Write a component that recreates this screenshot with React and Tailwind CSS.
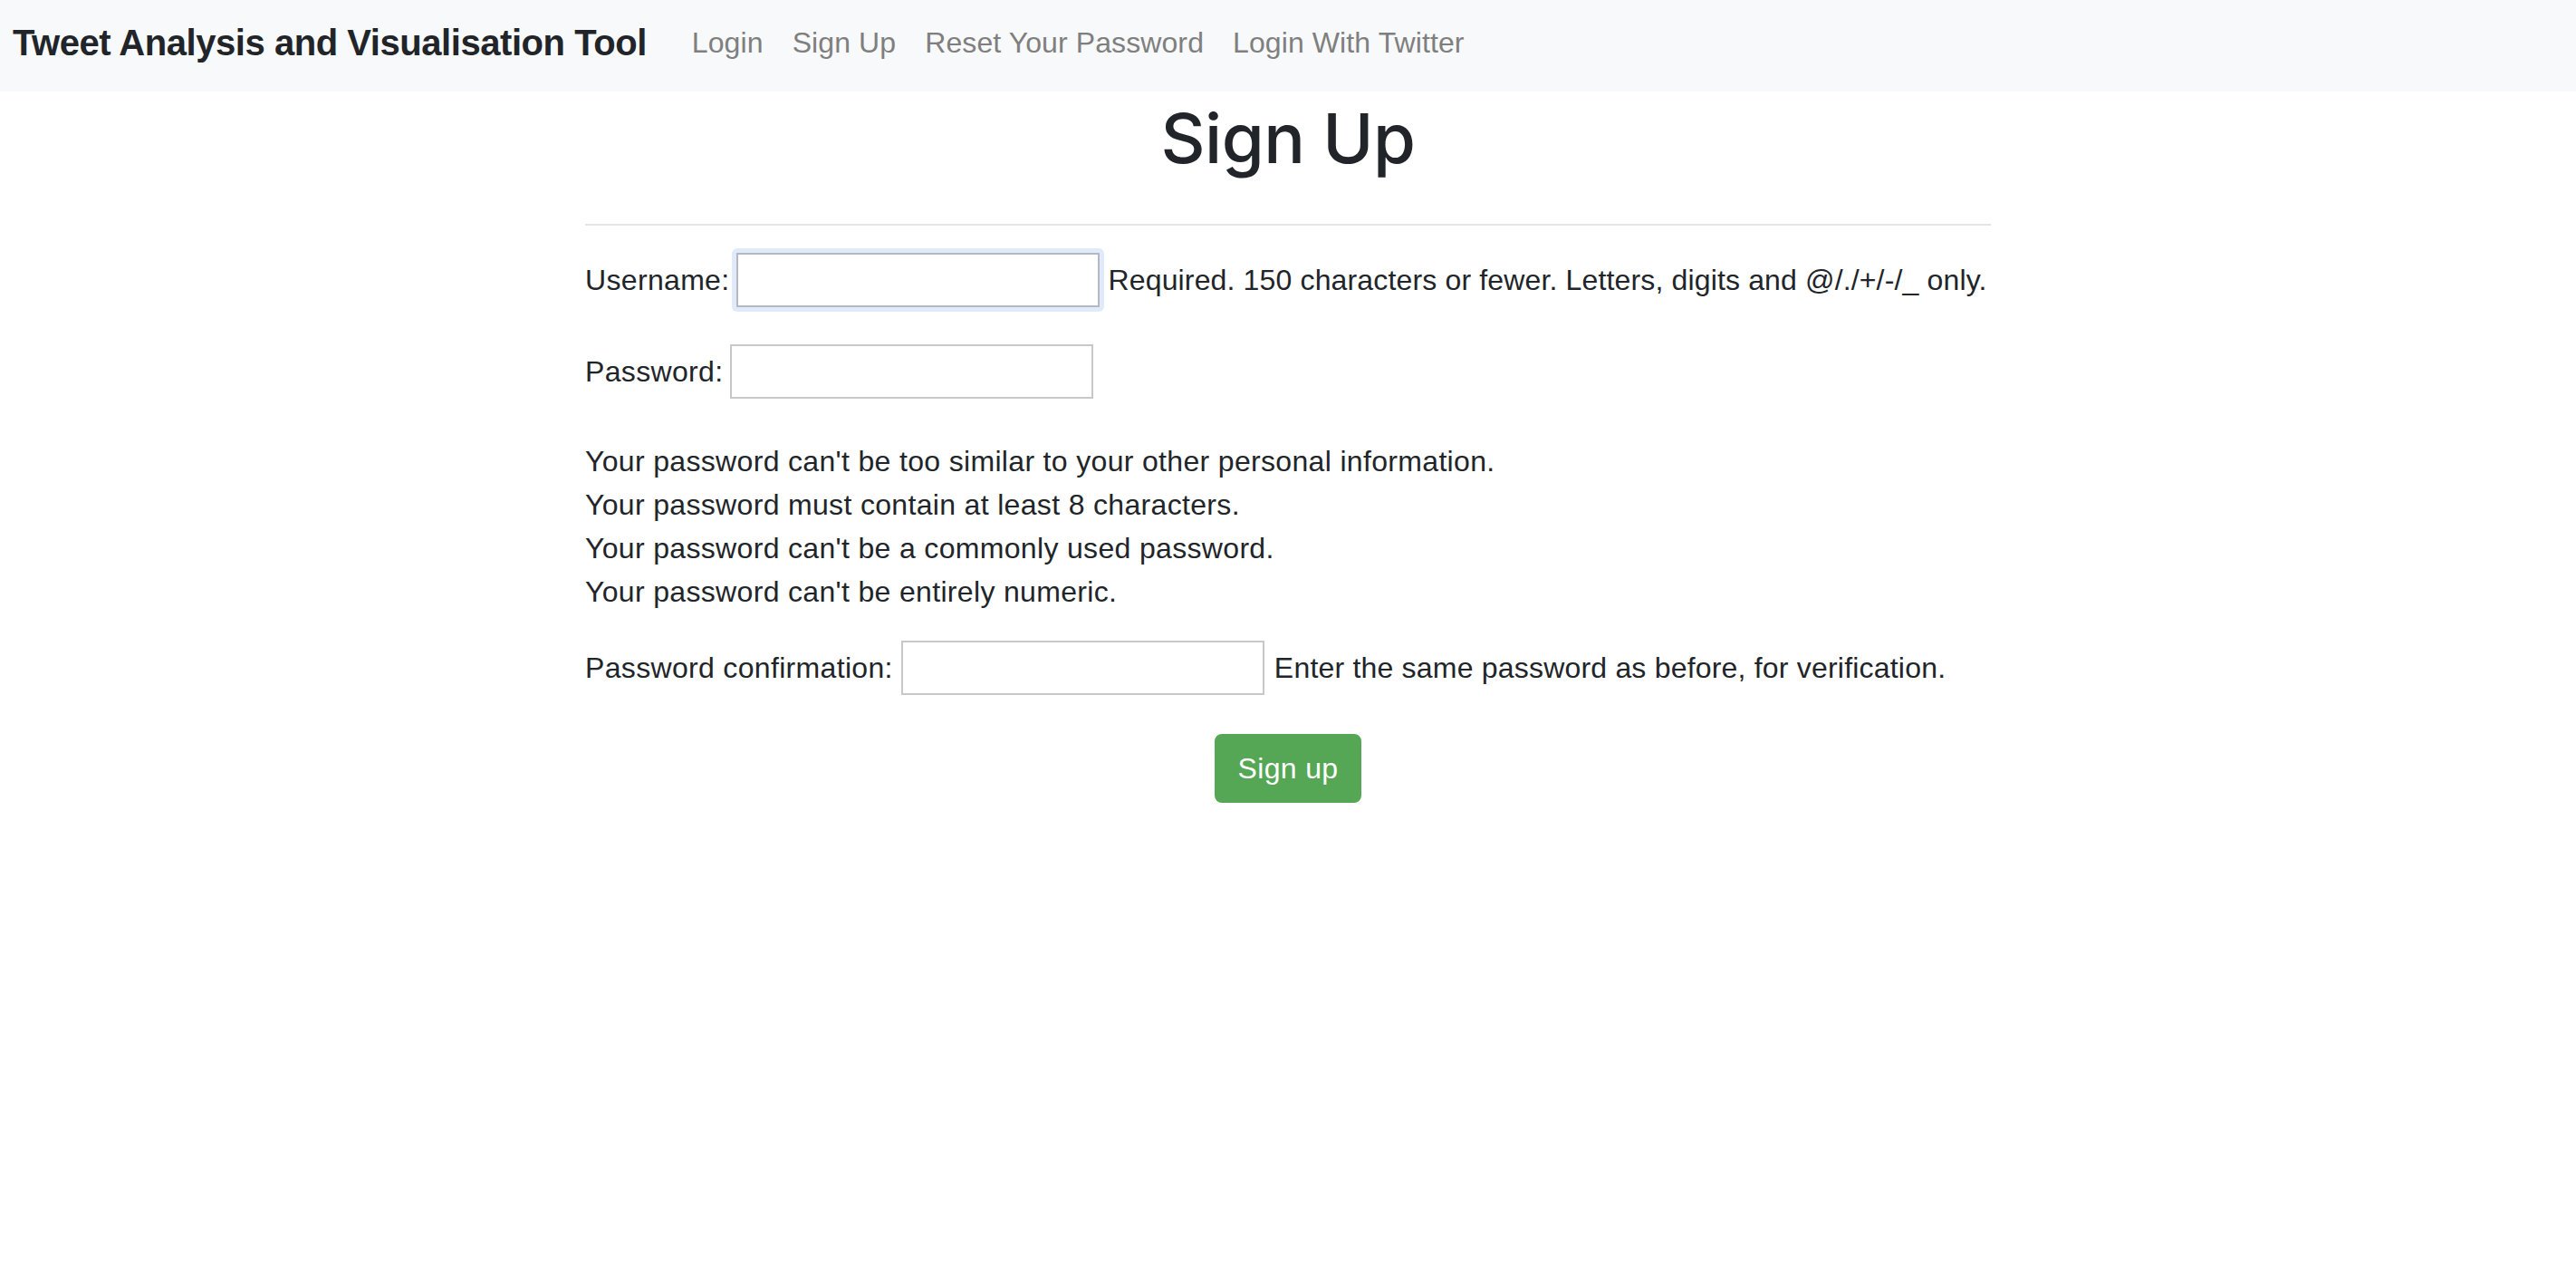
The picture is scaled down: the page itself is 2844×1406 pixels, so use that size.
const navLinks = ['Login', 'Sign Up', 'Reset Your Password', 'Login With Twitter'];

const rules = [
  "Your password can't be too similar to your other personal information.",
  'Your password must contain at least 8 characters.',
  "Your password can't be a commonly used password.",
  "Your password can't be entirely numeric.",
];

const Field = ({ focused }) => (
  <span className={`inline-block rounded-[6px] ${focused ? 'bg-[#e1eafb] p-[5px] -m-[5px]' : ''}`}>
    <input
      type="text"
      className={`block w-[401px] h-[60px] bg-white border-2 outline-none ${focused ? 'border-[#b3b8c2]' : 'border-[#c8c8c8]'}`}
    />
  </span>
);

export default function App() {
  return (
    <div className="min-h-screen bg-white text-[#212529] font-['Liberation_Sans',Arial,sans-serif] text-[32px] leading-[48px]">
      <nav className="h-[101px] bg-[#f8f9fa] flex items-center pl-[14px] pb-[8px]">
        <span className="text-[40px] leading-[60px] font-bold tracking-[-0.45px] text-[#212529]">
          Tweet Analysis and Visualisation Tool
        </span>
        <div className="flex ml-[34px]">
          {navLinks.map((l) => (
            <a key={l} href="#" className="px-[16px] text-[#7f7f7f] tracking-[0.1px]">
              {l}
            </a>
          ))}
        </div>
      </nav>

      <main className="w-[1552px] mx-auto tracking-[0.33px]">
        <h1 className="font-['Inter','Liberation_Sans',sans-serif] text-[76px] leading-[96px] font-medium tracking-[-0.5px] text-center mt-[3px]">
          Sign Up
        </h1>
        <hr className="mt-[47px] border-t-2 border-[#e6e6e6]" />

        <div className="flex items-center mt-[30px] whitespace-nowrap">
          <label>Username:</label>
          <span className="ml-[8px]">
            <Field focused />
          </span>
          <span className="ml-[9px] tracking-[0.15px]">
            Required. 150 characters or fewer. Letters, digits and @/./+/-/_ only.
          </span>
        </div>

        <div className="flex items-center mt-[41px] whitespace-nowrap">
          <label>Password:</label>
          <span className="ml-[8px]">
            <Field />
          </span>
        </div>

        <ul className="mt-[45px]">
          {rules.map((r) => (
            <li key={r}>{r}</li>
          ))}
        </ul>

        <div className="flex items-center mt-[30px] whitespace-nowrap">
          <label>Password confirmation:</label>
          <span className="ml-[9px]">
            <Field />
          </span>
          <span className="ml-[11px] tracking-[0.2px]">Enter the same password as before, for verification.</span>
        </div>

        <div className="flex justify-center mt-[43px]">
          <button className="h-[76px] px-[24px] rounded-[8px] bg-[#55a755] text-white border-2 border-[#55a755]">
            Sign up
          </button>
        </div>
      </main>
    </div>
  );
}
